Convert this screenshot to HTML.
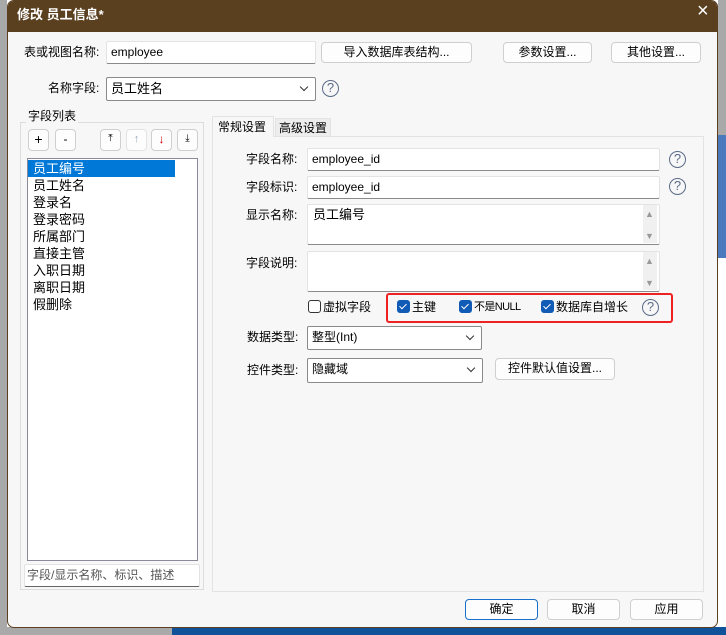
<!DOCTYPE html>
<html><head><meta charset="utf-8"><style>
*{box-sizing:border-box;margin:0;padding:0}
body{width:726px;height:635px;overflow:hidden;background:#fff;position:relative;font-family:"Liberation Sans","Noto Sans CJK SC",sans-serif;font-size:12px;color:#000}
.a{position:absolute}
.lbl{position:absolute;font-size:12px;line-height:14px;white-space:nowrap}
.inp{position:absolute;background:#fff;border:1px solid #e3e3e3;border-bottom:1px solid #8a8a8a;border-radius:2px;padding-left:4px;font-size:12px;line-height:20px}
.btn{position:absolute;background:#fdfdfd;border:1px solid #cfcfcf;border-radius:4px;text-align:center;font-size:12px;line-height:18px}
.sel{position:absolute;background:#fff;border:1px solid #8a8a8a;border-radius:2px;padding-left:4px;font-size:12px;line-height:21px}
.sel:after{content:"";position:absolute;right:8px;top:6px;width:5px;height:5px;border-right:1px solid #333;border-bottom:1px solid #333;transform:rotate(45deg)}
.help{position:absolute;width:17px;height:17px;border:1.4px solid #5a6b88;border-radius:50%;color:#5a6b88;font-size:13px;line-height:14px;text-align:center}
.cb{position:absolute;width:13px;height:13px;border-radius:3px;background:#0f5bb5}
.cb:after{content:"";position:absolute;left:4px;top:2px;width:3px;height:6px;border-right:1.3px solid #fff;border-bottom:1.3px solid #fff;transform:rotate(45deg)}
.sb{position:absolute;width:14px;background:#f0f0f0}
</style></head><body>
<div class="a" style="left:718px;top:0;width:8px;height:135px;background:#a9a9a9"></div>
<div class="a" style="left:718px;top:135px;width:8px;height:123px;background:#4a7abd"></div>
<div class="a" style="left:0;top:627px;width:172px;height:8px;background:#a9a9a9"></div>
<div class="a" style="left:172px;top:627px;width:554px;height:8px;background:#0f5299"></div>
<div class="a" style="left:0;top:0;width:7px;height:627px;background:#a9a9a9"></div>
<div class="a" style="left:7px;top:0;width:711px;height:628px;background:#f7f7f7;border:1px solid #5b4020;border-radius:7px;overflow:hidden">
<div class="a" style="left:0;top:0;width:711px;height:31px;background:#5b4020"></div>
</div>
<div class="lbl" style="left:17px;top:8px;color:#fff;font-size:13px;font-weight:bold">修改 员工信息*</div>
<div class="lbl" style="left:697px;top:4px;color:#fff;font-size:20px;font-weight:normal">×</div>

<div class="lbl" style="left:24px;top:45px">表或视图名称:</div>
<div class="inp" style="left:106px;top:41px;width:210px;height:23px">employee</div>
<div class="btn" style="left:321px;top:42px;width:151px;height:21px">导入数据库表结构...</div>
<div class="btn" style="left:503px;top:42px;width:89px;height:21px">参数设置...</div>
<div class="btn" style="left:611px;top:42px;width:90px;height:21px">其他设置...</div>

<div class="lbl" style="left:48px;top:81px">名称字段:</div>
<div class="sel" style="left:106px;top:77px;width:210px;height:24px;font-size:13px">员工姓名</div>
<div class="help" style="left:322px;top:80px">?</div>

<div class="a" style="left:20px;top:122px;width:184px;height:468px;border:1px solid #dcdcdc"></div>
<div class="lbl" style="left:26px;top:109px;background:#f7f7f7;padding:0 2px">字段列表</div>
<div class="btn" style="left:28px;top:129px;width:21px;height:22px;font-size:14px">+</div>
<div class="btn" style="left:55px;top:129px;width:21px;height:22px">-</div>
<div class="btn" style="left:100px;top:129px;width:21px;height:22px;font-size:10px">⤒</div>
<div class="btn" style="left:126px;top:129px;width:21px;height:22px;color:#9ab;font-size:11px;border-color:#e3e3e3">↑</div>
<div class="btn" style="left:151px;top:129px;width:21px;height:22px;color:#c00;font-size:12px">↓</div>
<div class="btn" style="left:177px;top:129px;width:21px;height:22px;font-size:10px">⤓</div>
<div class="a" style="left:27px;top:158px;width:171px;height:403px;background:#fff;border:1px solid #8a8a9a"></div>
<div class="a" style="left:28px;top:160px;width:147px;height:17px;background:#0078d7"></div>
<div class="a" style="left:33px;top:160px;line-height:17px;font-size:13px">
<div style="color:#fff">员工编号</div><div>员工姓名</div><div>登录名</div><div>登录密码</div><div>所属部门</div><div>直接主管</div><div>入职日期</div><div>离职日期</div><div>假删除</div></div>
<div class="inp" style="left:24px;top:564px;width:176px;height:23px;color:#555;border-bottom-color:#666;padding-left:2px">字段/显示名称、标识、描述</div>

<div class="a" style="left:212px;top:136px;width:492px;height:456px;border:1px solid #e3e3e3"></div>
<div class="a" style="left:212px;top:116px;width:62px;height:21px;background:#f7f7f7;border:1px solid #e3e3e3;border-bottom:none"></div>
<div class="lbl" style="left:218px;top:120px;font-size:12px">常规设置</div>
<div class="a" style="left:275px;top:118px;width:56px;height:18px;background:#ededed;border:1px solid #e3e3e3;border-bottom:none"></div>
<div class="lbl" style="left:279px;top:121px">高级设置</div>

<div class="lbl" style="left:246px;top:152px">字段名称:</div>
<div class="inp" style="left:307px;top:148px;width:353px;height:23px">employee_id</div>
<div class="help" style="left:669px;top:151px">?</div>
<div class="lbl" style="left:246px;top:180px">字段标识:</div>
<div class="inp" style="left:307px;top:176px;width:353px;height:23px">employee_id</div>
<div class="help" style="left:669px;top:178px">?</div>
<div class="lbl" style="left:246px;top:208px">显示名称:</div>
<div class="inp" style="left:307px;top:204px;width:353px;height:41px;padding-left:5px;font-size:13px">员工编号</div>
<div class="sb" style="left:643px;top:205px;height:38px"></div>
<div class="lbl" style="left:645px;top:207px;color:#999;font-size:9px">▲</div>
<div class="lbl" style="left:645px;top:229px;color:#999;font-size:9px">▼</div>
<div class="lbl" style="left:246px;top:256px">字段说明:</div>
<div class="inp" style="left:307px;top:251px;width:353px;height:41px"></div>
<div class="sb" style="left:643px;top:252px;height:38px"></div>
<div class="lbl" style="left:645px;top:254px;color:#999;font-size:9px">▲</div>
<div class="lbl" style="left:645px;top:276px;color:#999;font-size:9px">▼</div>

<div class="a" style="left:308px;top:300px;width:13px;height:13px;border:1px solid #333;border-radius:3px;background:#fff"></div>
<div class="lbl" style="left:323px;top:300px;font-size:12px">虚拟字段</div>
<div class="a" style="left:386px;top:293px;width:287px;height:30px;border:2px solid #ee2222;border-radius:3px"></div>
<div class="cb" style="left:397px;top:300px"></div>
<div class="lbl" style="left:412px;top:300px;font-size:12px">主键</div>
<div class="cb" style="left:459px;top:300px"></div>
<div class="lbl" style="left:474px;top:300px;font-size:11px;letter-spacing:-0.6px">不是NULL</div>
<div class="cb" style="left:541px;top:300px"></div>
<div class="lbl" style="left:556px;top:300px;font-size:12px">数据库自增长</div>
<div class="help" style="left:642px;top:299px">?</div>

<div class="lbl" style="left:247px;top:330px">数据类型:</div>
<div class="sel" style="left:307px;top:326px;width:175px;height:24px">整型(Int)</div>
<div class="lbl" style="left:247px;top:363px">控件类型:</div>
<div class="sel" style="left:307px;top:358px;width:176px;height:25px">隐藏域</div>
<div class="btn" style="left:495px;top:358px;width:120px;height:22px">控件默认值设置...</div>

<div class="btn" style="left:465px;top:599px;width:73px;height:21px;border-color:#1a6fc9">确定</div>
<div class="btn" style="left:547px;top:599px;width:73px;height:21px">取消</div>
<div class="btn" style="left:630px;top:599px;width:73px;height:21px">应用</div>
</body></html>
